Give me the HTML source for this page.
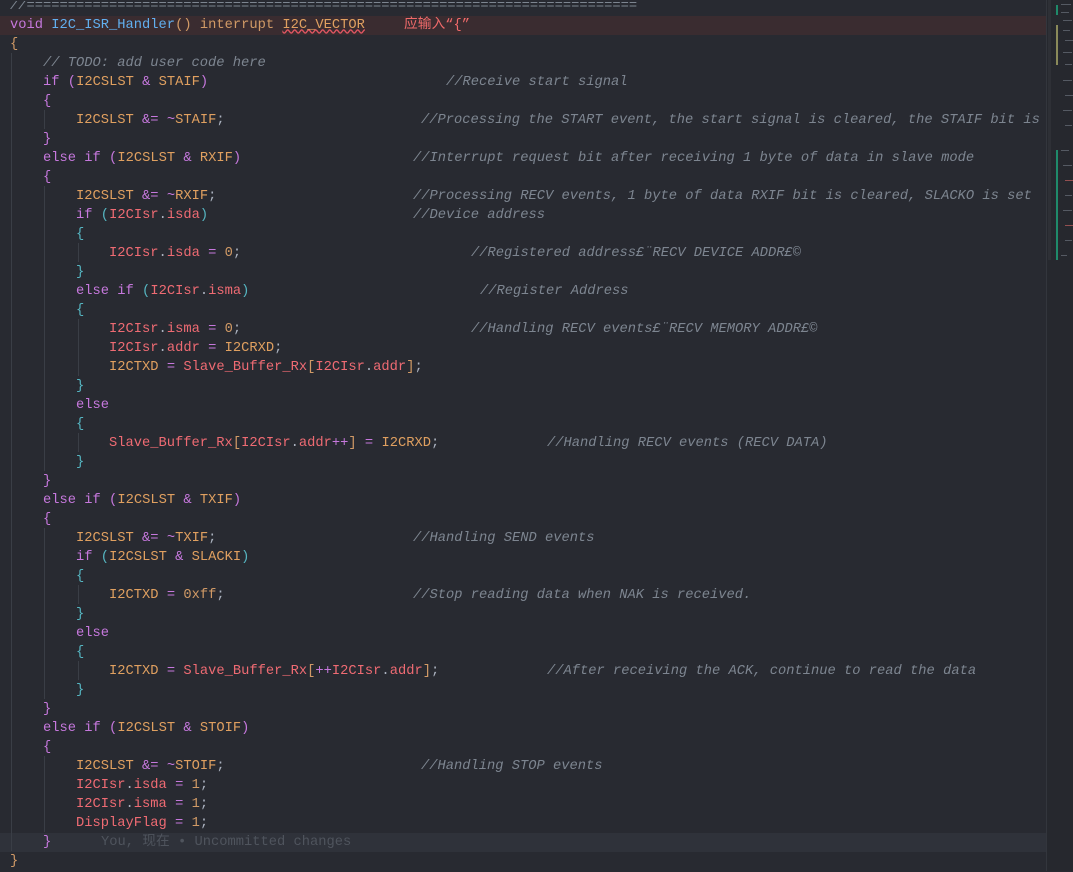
<!DOCTYPE html>
<html><head><meta charset="utf-8"><style>
html,body{margin:0;padding:0;}
body{width:1073px;height:871px;overflow:hidden;background:#282a31;position:relative;font-family:"Liberation Mono","Noto Sans CJK SC",monospace;font-size:13.75px;}
#ed{position:absolute;left:0;top:1px;width:1046px;height:871px;overflow:hidden;}
.l{position:absolute;left:10px;height:19px;line-height:19px;white-space:pre;color:#abb2bf;width:1100px;}
.c{color:#7d8590;font-style:italic;position:absolute;top:0;}
.cc{color:#7d8590;font-style:italic;}
.k{color:#c678dd}.f{color:#61afef}.m{color:#e0a060}.v{color:#ef6b73}.n{color:#d19a66}.o{color:#c678dd}
.b1{color:#d19a66}.b2{color:#c678dd}.b3{color:#56b6c2}
.g{position:absolute;width:1px;background:#3a3e46;}
#mm{position:absolute;left:1046px;top:0;width:27px;height:871px;background:#26282e;border-left:1px solid #33363d;}
.mm{position:absolute;height:1px;background:#6a6f7a;opacity:.7}
</style></head><body>
<div id="ed">
<div style="position:absolute;left:0;top:14.5px;width:1046px;height:19px;background:#3a2c30"></div>
<div style="position:absolute;left:0;top:831.5px;width:1046px;height:19px;background:#2f323a"></div>
<div class="g" style="left:11px;top:52px;height:798px"></div>
<div class="g" style="left:44px;top:109px;height:19px"></div>
<div class="g" style="left:44px;top:185px;height:285px"></div>
<div class="g" style="left:78px;top:242px;height:19px"></div>
<div class="g" style="left:78px;top:318px;height:57px"></div>
<div class="g" style="left:78px;top:432px;height:19px"></div>
<div class="g" style="left:44px;top:527px;height:171px"></div>
<div class="g" style="left:78px;top:584px;height:19px"></div>
<div class="g" style="left:78px;top:660px;height:19px"></div>
<div class="g" style="left:44px;top:755px;height:76px"></div>

<div class="l" style="top:-4.5px"><span class="cc">//==========================================================================</span></div>
<div class="l" style="top:14.5px"><span class="k">void</span> <span class="f">I2C_ISR_Handler</span><span class="b1">()</span> <span class="n">interrupt</span> <span class="m" style="text-decoration:underline wavy #e05561">I2C_VECTOR</span><span style="position:absolute;left:394px;color:#f06a6a">应输入“{”</span></div>
<div class="l" style="top:33.5px"><span class="b1">{</span></div>
<div class="l" style="top:52.5px">    <span class="cc">// TODO: add user code here</span></div>
<div class="l" style="top:71.5px">    <span class="k">if</span> <span class="b2">(</span><span class="m">I2CSLST</span> <span class="o">&amp;</span> <span class="m">STAIF</span><span class="b2">)</span><span class="c" style="left:436px">//Receive start signal</span></div>
<div class="l" style="top:90.5px">    <span class="b2">{</span></div>
<div class="l" style="top:109.5px">        <span class="m">I2CSLST</span> <span class="o">&amp;=</span> <span class="o">~</span><span class="m">STAIF</span>;<span class="c" style="left:411px">//Processing the START event, the start signal is cleared, the STAIF bit is</span></div>
<div class="l" style="top:128.5px">    <span class="b2">}</span></div>
<div class="l" style="top:147.5px">    <span class="k">else if</span> <span class="b2">(</span><span class="m">I2CSLST</span> <span class="o">&amp;</span> <span class="m">RXIF</span><span class="b2">)</span><span class="c" style="left:403px">//Interrupt request bit after receiving 1 byte of data in slave mode</span></div>
<div class="l" style="top:166.5px">    <span class="b2">{</span></div>
<div class="l" style="top:185.5px">        <span class="m">I2CSLST</span> <span class="o">&amp;=</span> <span class="o">~</span><span class="m">RXIF</span>;<span class="c" style="left:403px">//Processing RECV events, 1 byte of data RXIF bit is cleared, SLACKO is set</span></div>
<div class="l" style="top:204.5px">        <span class="k">if</span> <span class="b3">(</span><span class="v">I2CIsr</span>.<span class="v">isda</span><span class="b3">)</span><span class="c" style="left:403px">//Device address</span></div>
<div class="l" style="top:223.5px">        <span class="b3">{</span></div>
<div class="l" style="top:242.5px">            <span class="v">I2CIsr</span>.<span class="v">isda</span> <span class="o">=</span> <span class="n">0</span>;<span class="c" style="left:461px">//Registered address£¨RECV DEVICE ADDR£©</span></div>
<div class="l" style="top:261.5px">        <span class="b3">}</span></div>
<div class="l" style="top:280.5px">        <span class="k">else if</span> <span class="b3">(</span><span class="v">I2CIsr</span>.<span class="v">isma</span><span class="b3">)</span><span class="c" style="left:470px">//Register Address</span></div>
<div class="l" style="top:299.5px">        <span class="b3">{</span></div>
<div class="l" style="top:318.5px">            <span class="v">I2CIsr</span>.<span class="v">isma</span> <span class="o">=</span> <span class="n">0</span>;<span class="c" style="left:461px">//Handling RECV events£¨RECV MEMORY ADDR£©</span></div>
<div class="l" style="top:337.5px">            <span class="v">I2CIsr</span>.<span class="v">addr</span> <span class="o">=</span> <span class="m">I2CRXD</span>;</div>
<div class="l" style="top:356.5px">            <span class="m">I2CTXD</span> <span class="o">=</span> <span class="v">Slave_Buffer_Rx</span><span class="b1">[</span><span class="v">I2CIsr</span>.<span class="v">addr</span><span class="b1">]</span>;</div>
<div class="l" style="top:375.5px">        <span class="b3">}</span></div>
<div class="l" style="top:394.5px">        <span class="k">else</span></div>
<div class="l" style="top:413.5px">        <span class="b3">{</span></div>
<div class="l" style="top:432.5px">            <span class="v">Slave_Buffer_Rx</span><span class="b1">[</span><span class="v">I2CIsr</span>.<span class="v">addr</span><span class="o">++</span><span class="b1">]</span> <span class="o">=</span> <span class="m">I2CRXD</span>;<span class="c" style="left:537px">//Handling RECV events (RECV DATA)</span></div>
<div class="l" style="top:451.5px">        <span class="b3">}</span></div>
<div class="l" style="top:470.5px">    <span class="b2">}</span></div>
<div class="l" style="top:489.5px">    <span class="k">else if</span> <span class="b2">(</span><span class="m">I2CSLST</span> <span class="o">&amp;</span> <span class="m">TXIF</span><span class="b2">)</span></div>
<div class="l" style="top:508.5px">    <span class="b2">{</span></div>
<div class="l" style="top:527.5px">        <span class="m">I2CSLST</span> <span class="o">&amp;=</span> <span class="o">~</span><span class="m">TXIF</span>;<span class="c" style="left:403px">//Handling SEND events</span></div>
<div class="l" style="top:546.5px">        <span class="k">if</span> <span class="b3">(</span><span class="m">I2CSLST</span> <span class="o">&amp;</span> <span class="m">SLACKI</span><span class="b3">)</span></div>
<div class="l" style="top:565.5px">        <span class="b3">{</span></div>
<div class="l" style="top:584.5px">            <span class="m">I2CTXD</span> <span class="o">=</span> <span class="n">0xff</span>;<span class="c" style="left:403px">//Stop reading data when NAK is received.</span></div>
<div class="l" style="top:603.5px">        <span class="b3">}</span></div>
<div class="l" style="top:622.5px">        <span class="k">else</span></div>
<div class="l" style="top:641.5px">        <span class="b3">{</span></div>
<div class="l" style="top:660.5px">            <span class="m">I2CTXD</span> <span class="o">=</span> <span class="v">Slave_Buffer_Rx</span><span class="b1">[</span><span class="o">++</span><span class="v">I2CIsr</span>.<span class="v">addr</span><span class="b1">]</span>;<span class="c" style="left:537px">//After receiving the ACK, continue to read the data</span></div>
<div class="l" style="top:679.5px">        <span class="b3">}</span></div>
<div class="l" style="top:698.5px">    <span class="b2">}</span></div>
<div class="l" style="top:717.5px">    <span class="k">else if</span> <span class="b2">(</span><span class="m">I2CSLST</span> <span class="o">&amp;</span> <span class="m">STOIF</span><span class="b2">)</span></div>
<div class="l" style="top:736.5px">    <span class="b2">{</span></div>
<div class="l" style="top:755.5px">        <span class="m">I2CSLST</span> <span class="o">&amp;=</span> <span class="o">~</span><span class="m">STOIF</span>;<span class="c" style="left:411px">//Handling STOP events</span></div>
<div class="l" style="top:774.5px">        <span class="v">I2CIsr</span>.<span class="v">isda</span> <span class="o">=</span> <span class="n">1</span>;</div>
<div class="l" style="top:793.5px">        <span class="v">I2CIsr</span>.<span class="v">isma</span> <span class="o">=</span> <span class="n">1</span>;</div>
<div class="l" style="top:812.5px">        <span class="v">DisplayFlag</span> <span class="o">=</span> <span class="n">1</span>;</div>
<div class="l" style="top:831.5px">    <span class="b2">}</span><span style="position:absolute;left:91px;color:#4f545d">You, 现在 • Uncommitted changes</span></div>
<div class="l" style="top:850.5px"><span class="b1">}</span></div>
</div>
<div id="mm">
<div style="position:absolute;left:1px;top:0;width:3px;height:260px;background:#2e3036"></div>
<div style="position:absolute;left:9px;top:150px;width:2px;height:110px;background:#1f8a6a"></div>
<div style="position:absolute;left:9px;top:5px;width:2px;height:10px;background:#1f8a6a"></div>
<div style="position:absolute;left:9px;top:25px;width:2px;height:40px;background:#8a8a5a"></div>
<div class="mm" style="left:14px;top:4px;width:10px"></div>
<div class="mm" style="left:14px;top:12px;width:8px"></div>
<div class="mm" style="left:16px;top:20px;width:9px"></div>
<div class="mm" style="left:16px;top:30px;width:7px"></div>
<div class="mm" style="left:18px;top:40px;width:8px"></div>
<div class="mm" style="left:16px;top:52px;width:9px"></div>
<div class="mm" style="left:18px;top:64px;width:7px"></div>
<div class="mm" style="left:16px;top:80px;width:9px"></div>
<div class="mm" style="left:18px;top:95px;width:8px"></div>
<div class="mm" style="left:16px;top:110px;width:9px"></div>
<div class="mm" style="left:18px;top:125px;width:7px"></div>
<div class="mm" style="left:14px;top:150px;width:8px"></div>
<div class="mm" style="left:16px;top:165px;width:9px"></div>
<div class="mm" style="left:18px;top:180px;width:8px;background:#c06060"></div>
<div class="mm" style="left:18px;top:195px;width:7px"></div>
<div class="mm" style="left:16px;top:210px;width:9px"></div>
<div class="mm" style="left:18px;top:225px;width:8px;background:#c06060"></div>
<div class="mm" style="left:18px;top:240px;width:7px"></div>
<div class="mm" style="left:14px;top:255px;width:6px"></div>
</div>
</body></html>
